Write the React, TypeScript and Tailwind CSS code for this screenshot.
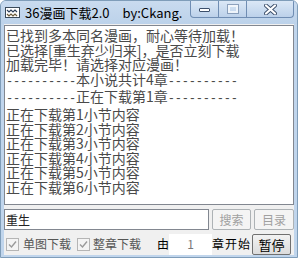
import React from "react";

const cjk = { fontFamily: '"Noto Sans CJK SC", "Noto Sans", sans-serif' };

function D() {
  return (
    <span className="text-[12px] tracking-[-0.2px]" style={{ fontFamily: '"Liberation Mono", monospace' }}>
      ----------
    </span>
  );
}

function Check() {
  return (
    <span className="w-[13px] h-[13px] border border-[#b5b5b5] bg-[#f4f4f4] flex items-center justify-center shrink-0">
      <svg width="9" height="9" viewBox="0 0 9 9">
        <path d="M1 4.5 L3.5 7 L8 1.5" stroke="#9a9a9a" strokeWidth="1.4" fill="none" />
      </svg>
    </span>
  );
}

export default function App() {
  const lines: React.ReactNode[] = [
    "已找到多本同名漫画，耐心等待加载！",
    "已选择[重生弃少归来]，是否立刻下载",
    "加载完毕！请选择对应漫画！",
    <>
      <D />本小说共计4章<D />
    </>,
    <>
      <D />正在下载第1章<D />
    </>,
    "正在下载第1小节内容",
    "正在下载第2小节内容",
    "正在下载第3小节内容",
    "正在下载第4小节内容",
    "正在下载第5小节内容",
    "正在下载第6小节内容",
  ];
  return (
    <div className="w-[298px] h-[258px] bg-[#c0d5ec] border border-[#7f9db9] rounded-t-[6px] flex flex-col overflow-hidden relative" style={cjk}>
      {/* title bar */}
      <div className="h-[23px] flex items-center pl-[4px] shrink-0 bg-gradient-to-b from-[#c9dbef] to-[#bcd2ea] whitespace-nowrap">
        <svg width="15" height="11" viewBox="0 0 15 11" className="shrink-0">
          <rect x="0.5" y="0.5" width="14" height="10" fill="#ffffff" stroke="#3a4a5a" />
          <path d="M2 3 L4 5 L6 3 L8 5 L10 3 L12 5" stroke="#2c3e58" strokeWidth="1.2" fill="none" />
          <path d="M2 7 L4 9 L6 7 L8 9 L10 7 L12 9" stroke="#6a5a3a" strokeWidth="1.2" fill="none" />
        </svg>
        <span className="ml-[5px] text-[13px] text-black leading-none">36漫画下载2.0</span>
        <span className="ml-[13px] text-[13px] text-black leading-none">by:Ckang.</span>
      </div>
      {/* caption buttons */}
      <div className="absolute top-0 left-[189px] flex h-[17px]">
        <div className="w-[29px] h-full border border-[#6f8db3] border-t-0 rounded-bl-[4px] bg-gradient-to-b from-[#dbe8f6] to-[#bcd1ea] flex items-center justify-center">
          <span className="w-[11px] h-[4px] bg-white border border-[#3c4f6b] rounded-[1px] mt-[2px]" />
        </div>
        <div className="w-[28px] h-full border-b border-r border-[#6f8db3] bg-gradient-to-b from-[#dbe8f6] to-[#bcd1ea] flex items-center justify-center">
          <span className="w-[10px] h-[8px] border-[2px] border-[#ffffff] outline outline-1 outline-[#6f86a6] opacity-70" />
        </div>
        <div className="w-[47px] h-full border-b border-r border-[#6f8db3] rounded-br-[4px] bg-gradient-to-b from-[#dbe8f6] to-[#bcd1ea] flex items-center justify-center">
          <svg width="13" height="11" viewBox="0 0 13 11">
            <path d="M2 1.5 L11 9.5 M11 1.5 L2 9.5" stroke="#3c4f6b" strokeWidth="4" strokeLinecap="round" />
            <path d="M2 1.5 L11 9.5 M11 1.5 L2 9.5" stroke="#ffffff" strokeWidth="2.2" strokeLinecap="round" />
          </svg>
        </div>
      </div>
      {/* client */}
      <div className="flex-1 mx-[3px] mb-[3px] bg-[#f0f0f0] flex flex-col">
        <div className="h-[180px] mt-[1px] bg-white border border-[#828790] px-[1px] pt-[2px] overflow-hidden text-[14px] leading-[14.6px] text-[#4a4a4a] whitespace-pre">
          {lines.map((l, i) => (
            <div key={i}>{l}</div>
          ))}
        </div>
        <div className="flex items-center mt-[4px] h-[21px] text-[12px] leading-none whitespace-nowrap">
          <div className="w-[205px] h-full bg-white border border-[#828790] text-[#222] pl-[1px] flex items-center">
            重生
          </div>
          <div className="ml-[3px] w-[39px] h-full border border-[#adb2b5] rounded-[2px] bg-[#f4f4f4] text-[#a0a0a0] flex items-center justify-center">
            搜索
          </div>
          <div className="ml-[3px] w-[40px] h-full border border-[#adb2b5] rounded-[2px] bg-[#f4f4f4] text-[#a0a0a0] flex items-center justify-center">
            目录
          </div>
        </div>
        <div className="flex items-center mt-[3px] h-[22px] text-[12px] leading-none whitespace-nowrap">
          <div className="ml-[2px]"><Check /></div>
          <span className="ml-[4px] text-[#555]">单图下载</span>
          <div className="ml-[6px]"><Check /></div>
          <span className="ml-[3px] text-[#555]">整章下载</span>
          <span className="ml-[16px] text-black">由</span>
          <div className="w-[43px] h-[21px] bg-white text-[#777] flex items-center justify-center">1</div>
          <span className="text-black tracking-[1px]">章开始</span>
          <div className="ml-[1px] w-[39px] h-[21px] border border-[#707070] rounded-[2px] bg-gradient-to-b from-[#f2f2f2] to-[#dcdcdc] text-black text-[13px] flex items-center justify-center">
            暂停
          </div>
        </div>
      </div>
    </div>
  );
}
